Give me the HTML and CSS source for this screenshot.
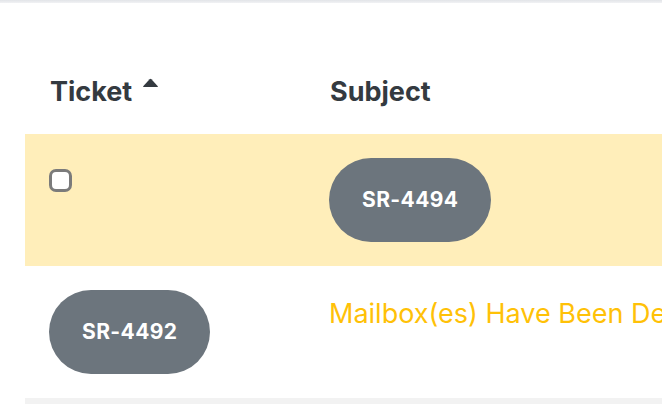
FILE: index.html
```html
<!DOCTYPE html>
<html>
<head>
<meta charset="utf-8">
<link rel="stylesheet" href="styles.css">
</head>
<body>
<div class="topbar"></div>
<div class="wrap">
  <table class="tickets">
    <thead>
      <tr>
        <th class="col-ticket">Ticket <svg class="caret" width="17" height="9" viewBox="0 0 17 9"><path d="M1.2 8.2 L7.6 1.2 Q8.5 0.3 9.4 1.2 L15.8 8.2 Q16.3 9 15.3 9 L1.7 9 Q0.7 9 1.2 8.2 Z" fill="#343a40"/></svg></th>
        <th class="col-subject">Subject</th>
      </tr>
    </thead>
    <tbody>
      <tr class="row-warning">
        <td><input type="checkbox" class="check"></td>
        <td><span class="badge">SR-4494</span></td>
      </tr>
      <tr>
        <td><span class="badge">SR-4492</span></td>
        <td><span class="subject-link">Mailbox(es) Have Been Deactivated</span></td>
      </tr>
      <tr class="row-striped">
        <td><span class="badge">SR-4490</span></td>
        <td></td>
      </tr>
    </tbody>
  </table>
</div>
</body>
</html>
```
FILE: styles.css
```css
html, body {
  margin: 0;
  padding: 0;
  background: #ffffff;
  overflow: hidden;
}
body {
  font-family: Inter, "Noto Sans", sans-serif;
  width: 662px;
  height: 404px;
}
.topbar {
  height: 3px;
  background: linear-gradient(#e2e4e8, #f1f2f4);
}
.wrap {
  padding: 42px 0 0 25px;
}
.tickets {
  border-collapse: collapse;
  width: 1100px;
  font-size: 27px;
  line-height: 39px;
}
.tickets th,
.tickets td {
  padding: 24px 24px 24px 24px;
  text-align: left;
  vertical-align: top;
}
.tickets th {
  font-weight: 700;
  color: #343a40;
  font-size: 27px;
  padding: 27px 24px 23px 25px;
}
.col-ticket {
  width: 231px;
}
.caret {
  vertical-align: 14px;
  margin-left: 3px;
}
.row-warning {
  background: #ffeeba;
}
.row-striped {
  background: #f2f2f2;
}
.check {
  appearance: none;
  -webkit-appearance: none;
  margin: 11px 0 0 0;
  width: 23px;
  height: 23px;
  border: 3px solid #7b7b7b;
  border-radius: 7px;
  background: #ffffff;
  box-sizing: border-box;
  vertical-align: top;
}
.badge {
  display: inline-block;
  background: #6c757d;
  color: #ffffff;
  font-weight: 700;
  font-size: 21px;
  line-height: 84px;
  height: 84px;
  padding: 0 33px;
  border-radius: 42px;
  letter-spacing: 0.4px;
  vertical-align: top;
}
.subject-link {
  display: inline-block;
  padding-top: 4px;
  color: #ffc107;
  white-space: nowrap;
}
```
